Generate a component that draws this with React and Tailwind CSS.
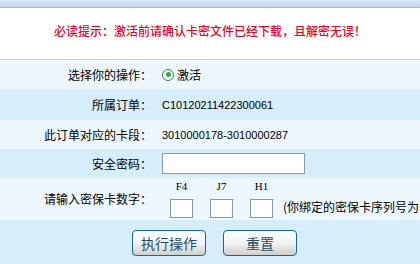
const font = "font-['SimSun','Noto_Sans_CJK_SC',sans-serif]";

function Row({ label, tone, height, children }) {
  return (
    <div className={`flex items-center ${tone} ${height}`}>
      <div className="w-[152px] text-right text-[12px] text-black shrink-0">{label}</div>
      <div className="pl-[10px] flex-1 text-[12px] text-black">{children}</div>
    </div>
  );
}

function CardBox({ code }) {
  return (
    <div className="flex flex-col items-center w-[23px]">
      <span className="text-[11px] leading-none font-['Liberation_Serif',serif]">{code}</span>
      <input className="mt-[7px] w-[23px] h-[19px] bg-white border border-[#7f9db9] outline-none" />
    </div>
  );
}

export default function App() {
  return (
    <div className={`w-[420px] h-[264px] overflow-hidden bg-[#d6edfa] ${font}`}>
      <div className="h-[8px] bg-gradient-to-b from-[#dde9fb] to-[#c1d7f5] border-b border-[#9cb9e8]" />
      <div className="h-[51px] bg-white pt-[14px] text-center text-[12px] font-medium text-[#e2062c]">
        必读提示：激活前请确认卡密文件已经下载，且解密无误！
      </div>
      <div className="border-t border-[#c4ccd4]" />
      <Row label="选择你的操作：" tone="bg-[#eef7fe]" height="h-[29px]">
        <label className="flex items-center gap-[3px]">
          <span className="w-[12px] h-[12px] rounded-full border border-[#3f6e98] bg-white flex items-center justify-center">
            <span className="w-[5px] h-[5px] rounded-full bg-[#25b33c]" />
          </span>
          <span>激活</span>
        </label>
      </Row>
      <Row label="所属订单：" tone="bg-[#d6edfa]" height="h-[31px]">
        <span className="font-['Liberation_Sans',sans-serif] text-[11px]">C10120211422300061</span>
      </Row>
      <Row label="此订单对应的卡段：" tone="bg-[#eef7fe]" height="h-[29px]">
        <span className="font-['Liberation_Sans',sans-serif] text-[11px]">3010000178-3010000287</span>
      </Row>
      <Row label="安全密码：" tone="bg-[#d6edfa]" height="h-[29px]">
        <input type="password" className="w-[143px] h-[21px] bg-white border border-[#7f9db9] outline-none" />
      </Row>
      <Row label="请输入密保卡数字：" tone="bg-[#eef7fe]" height="h-[42px]">
        <div className="flex items-end gap-[17px] pl-[8px]">
          <CardBox code="F4" />
          <CardBox code="J7" />
          <CardBox code="H1" />
          <span className="whitespace-nowrap mb-[2px] -ml-[7px]">(你绑定的密保卡序列号为</span>
        </div>
      </Row>
      <div className="flex gap-[17px] pl-[132px] pt-[10px]">
        <button className="w-[74px] h-[26px] rounded-[4px] border border-[#16698e] bg-gradient-to-b from-white via-[#f3f3f3] to-[#cfcfcf] text-[14px] text-[#1d4f6b]">
          执行操作
        </button>
        <button className="w-[74px] h-[26px] rounded-[4px] border border-[#16698e] bg-gradient-to-b from-white via-[#f3f3f3] to-[#cfcfcf] text-[14px] text-[#1d4f6b]">
          重置
        </button>
      </div>
    </div>
  );
}
